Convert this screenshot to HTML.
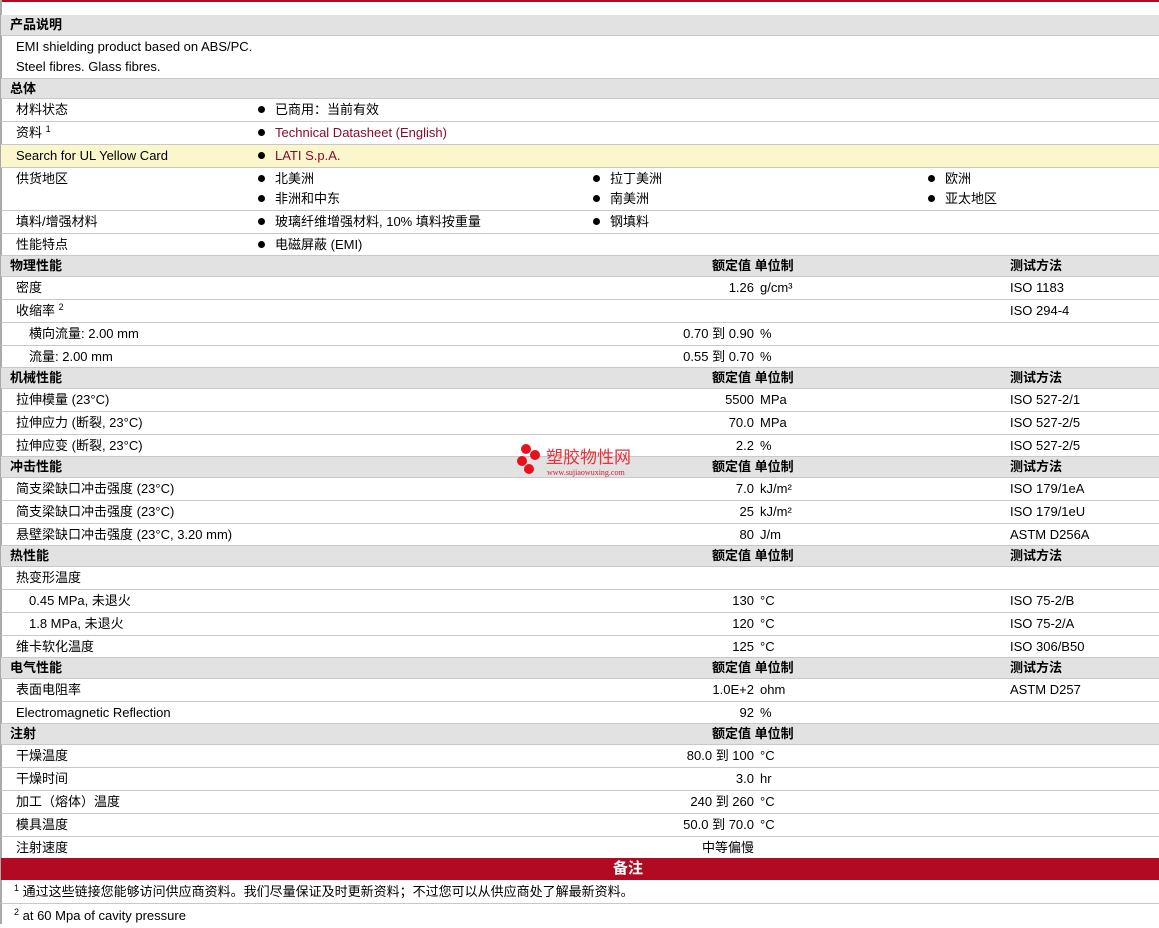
<!DOCTYPE html>
<html><head><meta charset="utf-8"><style>
*{margin:0;padding:0;box-sizing:border-box}
body{width:1159px;height:924px;overflow:hidden;background:#fff;font-family:"Liberation Sans","Noto Sans CJK SC",sans-serif;font-size:13px;color:#000;position:relative}
.r{position:absolute;left:1px;width:1158px;border-bottom:1px solid #c8c8c8}
.h{background:#e2e2e2;font-weight:bold;font-size:13px}
.r span{position:absolute;white-space:nowrap}
.l{left:15px}.s{left:28px}
.v{right:405px;text-align:right}
.u{left:759px}.t{left:1009px}
.b1{left:257px}.b2{left:592px}.b3{left:927px}
.dot::before{content:"";display:inline-block;width:7px;height:7px;border-radius:50%;background:#000;margin-right:10px;vertical-align:1px}
a{color:#8b0a2a;text-decoration:none}
sup{font-size:9px;vertical-align:5px;line-height:0}
.hh{left:711px}.ht{left:1009px}
</style></head><body>
<div style="position:absolute;left:0;top:0;width:1159px;height:2px;background:#b20a22"></div>
<div style="position:absolute;left:0;top:0;width:2px;height:924px;background:#aaa"></div>

<div class="r h" style="top:15px;height:21px;line-height:20px"><span style="left:9px">产品说明</span></div>
<div class="r" style="top:36px;height:42px;border:none"><span class="l" style="top:3px">EMI shielding product based on ABS/PC.</span><span class="l" style="top:23px">Steel fibres. Glass fibres.</span></div>
<div class="r h" style="top:78px;height:21px;line-height:20px;border-top:1px solid #c8c8c8"><span style="left:9px">总体</span></div>
<div class="r" style="top:99px;height:23px;line-height:22px"><span class="l">材料状态</span><span class="b1 dot">已商用：当前有效</span></div>
<div class="r" style="top:122px;height:23px;line-height:22px"><span class="l">资料 <sup>1</sup></span><span class="b1 dot"><a>Technical Datasheet (English)</a></span></div>
<div class="r" style="top:145px;height:23px;line-height:22px;background:#fbf6cc"><span class="l">Search for UL Yellow Card</span><span class="b1 dot"><a>LATI S.p.A.</a></span></div>
<div class="r" style="top:168px;height:43px;line-height:20px"><span class="l" style="top:1px">供货地区</span>
<span class="b1 dot" style="top:1px">北美洲</span><span class="b2 dot" style="top:1px">拉丁美洲</span><span class="b3 dot" style="top:1px">欧洲</span>
<span class="b1 dot" style="top:21px">非洲和中东</span><span class="b2 dot" style="top:21px">南美洲</span><span class="b3 dot" style="top:21px">亚太地区</span></div>
<div class="r" style="top:211px;height:23px;line-height:22px"><span class="l">填料/增强材料</span><span class="b1 dot">玻璃纤维增强材料, 10% 填料按重量</span><span class="b2 dot">钢填料</span></div>
<div class="r" style="top:234px;height:22px;line-height:22px"><span class="l">性能特点</span><span class="b1 dot">电磁屏蔽 (EMI)</span></div>

<div class="r h" style="top:256px;height:21px;line-height:20px"><span style="left:9px">物理性能</span><span class="hh">额定值 单位制</span><span class="ht">测试方法</span></div>
<div class="r" style="top:277px;height:23px;line-height:22px"><span class="l">密度</span><span class="v">1.26</span><span class="u">g/cm³</span><span class="t">ISO 1183</span></div>
<div class="r" style="top:300px;height:23px;line-height:22px"><span class="l">收缩率 <sup>2</sup></span><span class="t">ISO 294-4</span></div>
<div class="r" style="top:323px;height:23px;line-height:22px"><span class="s">横向流量: 2.00 mm</span><span class="v">0.70 到 0.90</span><span class="u">%</span></div>
<div class="r" style="top:346px;height:22px;line-height:22px"><span class="s">流量: 2.00 mm</span><span class="v">0.55 到 0.70</span><span class="u">%</span></div>

<div class="r h" style="top:368px;height:21px;line-height:20px"><span style="left:9px">机械性能</span><span class="hh">额定值 单位制</span><span class="ht">测试方法</span></div>
<div class="r" style="top:389px;height:23px;line-height:22px"><span class="l">拉伸模量 (23°C)</span><span class="v">5500</span><span class="u">MPa</span><span class="t">ISO 527-2/1</span></div>
<div class="r" style="top:412px;height:23px;line-height:22px"><span class="l">拉伸应力 (断裂, 23°C)</span><span class="v">70.0</span><span class="u">MPa</span><span class="t">ISO 527-2/5</span></div>
<div class="r" style="top:435px;height:22px;line-height:22px"><span class="l">拉伸应变 (断裂, 23°C)</span><span class="v">2.2</span><span class="u">%</span><span class="t">ISO 527-2/5</span></div>

<div class="r h" style="top:457px;height:21px;line-height:20px"><span style="left:9px">冲击性能</span><span class="hh">额定值 单位制</span><span class="ht">测试方法</span></div>
<div class="r" style="top:478px;height:23px;line-height:22px"><span class="l">简支梁缺口冲击强度 (23°C)</span><span class="v">7.0</span><span class="u">kJ/m²</span><span class="t">ISO 179/1eA</span></div>
<div class="r" style="top:501px;height:23px;line-height:22px"><span class="l">简支梁缺口冲击强度 (23°C)</span><span class="v">25</span><span class="u">kJ/m²</span><span class="t">ISO 179/1eU</span></div>
<div class="r" style="top:524px;height:22px;line-height:22px"><span class="l">悬壁梁缺口冲击强度 (23°C, 3.20 mm)</span><span class="v">80</span><span class="u">J/m</span><span class="t">ASTM D256A</span></div>

<div class="r h" style="top:546px;height:21px;line-height:20px"><span style="left:9px">热性能</span><span class="hh">额定值 单位制</span><span class="ht">测试方法</span></div>
<div class="r" style="top:567px;height:23px;line-height:22px"><span class="l">热变形温度</span></div>
<div class="r" style="top:590px;height:23px;line-height:22px"><span class="s">0.45 MPa, 未退火</span><span class="v">130</span><span class="u">°C</span><span class="t">ISO 75-2/B</span></div>
<div class="r" style="top:613px;height:23px;line-height:22px"><span class="s">1.8 MPa, 未退火</span><span class="v">120</span><span class="u">°C</span><span class="t">ISO 75-2/A</span></div>
<div class="r" style="top:636px;height:22px;line-height:22px"><span class="l">维卡软化温度</span><span class="v">125</span><span class="u">°C</span><span class="t">ISO 306/B50</span></div>

<div class="r h" style="top:658px;height:21px;line-height:20px"><span style="left:9px">电气性能</span><span class="hh">额定值 单位制</span><span class="ht">测试方法</span></div>
<div class="r" style="top:679px;height:23px;line-height:22px"><span class="l">表面电阻率</span><span class="v">1.0E+2</span><span class="u">ohm</span><span class="t">ASTM D257</span></div>
<div class="r" style="top:702px;height:22px;line-height:22px"><span class="l">Electromagnetic Reflection</span><span class="v">92</span><span class="u">%</span></div>

<div class="r h" style="top:724px;height:21px;line-height:20px"><span style="left:9px">注射</span><span class="hh">额定值 单位制</span></div>
<div class="r" style="top:745px;height:23px;line-height:22px"><span class="l">干燥温度</span><span class="v">80.0 到 100</span><span class="u">°C</span></div>
<div class="r" style="top:768px;height:23px;line-height:22px"><span class="l">干燥时间</span><span class="v">3.0</span><span class="u">hr</span></div>
<div class="r" style="top:791px;height:23px;line-height:22px"><span class="l">加工（熔体）温度</span><span class="v">240 到 260</span><span class="u">°C</span></div>
<div class="r" style="top:814px;height:23px;line-height:22px"><span class="l">模具温度</span><span class="v">50.0 到 70.0</span><span class="u">°C</span></div>
<div class="r" style="top:837px;height:21px;line-height:21px;border:none"><span class="l">注射速度</span><span class="v">中等偏慢</span></div>

<div style="position:absolute;left:1px;top:858px;width:1158px;height:22px;background:#b20a22;color:#fff;font-weight:bold;font-size:15px;line-height:22px"><span style="position:absolute;left:612px">备注</span></div>
<div class="r" style="top:880px;height:24px;line-height:24px"><span class="l" style="left:13px"><sup>1</sup> 通过这些链接您能够访问供应商资料。我们尽量保证及时更新资料；不过您可以从供应商处了解最新资料。</span></div>
<div class="r" style="top:904px;height:20px;line-height:24px;border:none"><span class="l" style="left:13px"><sup>2</sup> at 60 Mpa of cavity pressure</span></div>

<div style="position:absolute;left:517px;top:444px;width:30px;height:32px">
<div style="position:absolute;left:4px;top:0px;width:10px;height:10px;border-radius:50%;background:#e8101a"></div>
<div style="position:absolute;left:13px;top:6px;width:10px;height:10px;border-radius:50%;background:#e8101a"></div>
<div style="position:absolute;left:0;top:12px;width:10px;height:10px;border-radius:50%;background:#e8101a"></div>
<div style="position:absolute;left:7px;top:20px;width:10px;height:10px;border-radius:50%;background:#e8101a"></div>
</div>
<div style="position:absolute;left:546px;top:449px;color:#e8303a;font-size:17px;line-height:18px">塑胶物性网</div>
<div style="position:absolute;left:547px;top:468px;color:#d02030;font-size:8px;font-family:'Liberation Serif',serif">www.sujiaowuxing.com</div>
</body></html>
